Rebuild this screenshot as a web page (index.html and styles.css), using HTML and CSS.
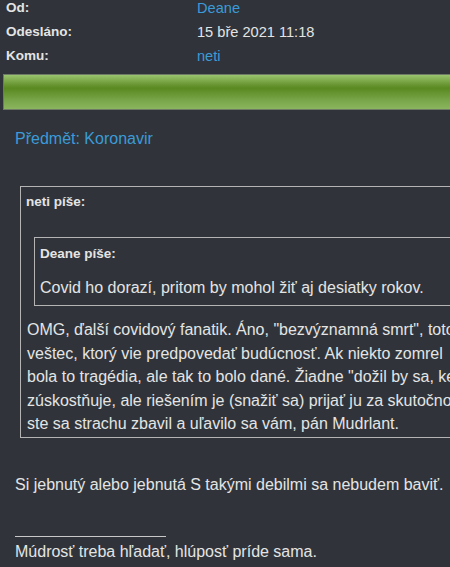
FILE: index.html
```html
<!DOCTYPE html>
<html lang="cs">
<head>
  <meta charset="UTF-8">
  <title>Zpráva</title>
  <link rel="stylesheet" href="styles.css">
</head>
<body>

  <div class="meta">
    <div class="meta-label">Od:</div>
    <div class="meta-value"><a href="#">Deane</a></div>
    <div class="meta-label">Odesláno:</div>
    <div class="meta-value">15 bře 2021 11:18</div>
    <div class="meta-label">Komu:</div>
    <div class="meta-value"><a href="#">neti</a></div>
  </div>

  <div class="bar"></div>

  <div class="subject">Předmět: Koronavir</div>

  <div class="post">
    <div class="quote">
      <div class="quote-head">neti píše:</div>
      <div class="quote inner">
        <div class="quote-head">Deane píše:</div>
        <div class="quote-text">Covid ho dorazí, pritom by mohol žiť aj desiatky rokov.</div>
      </div>
      <div class="quote-text outer-text">OMG, ďalší covidový fanatik. Áno, "bezvýznamná smrt", toto sa dá povedať iba ak ste<br>
veštec, ktorý vie predpovedať budúcnosť. Ak niekto zomrel<br>
bola to tragédia, ale tak to bolo dané. Žiadne "dožil by sa, keby..." ktoré to<br>
zúskostňuje, ale riešením je (snažiť sa) prijať ju za skutočnosť. Dúfam, že<br>
ste sa strachu zbavil a uľavilo sa vám, pán Mudrlant.</div>
    </div>

    <p class="reply">Si jebnutý alebo jebnutá S takými debilmi sa nebudem baviť.</p>

    <div class="signature">Múdrosť treba hľadať, hlúposť príde sama.</div>
  </div>

</body>
</html>
```

FILE: styles.css
```css
body {
  font-family: 'Liberation Sans', Arial, sans-serif;
  background-color: #30343a;
  color: #e4e4e4;
  margin: 0;
  overflow: hidden;
}
a {
  color: #3b9bd8;
  text-decoration: none;
}
.meta {
  display: grid;
  grid-template-columns: 191px 1fr;
  margin-top: -4px;
  padding-left: 6px;
  line-height: 24px;
}
.meta-label {
  font-weight: bold;
  font-size: 13.5px;
}
.meta-value {
  font-size: 14.6px;
  white-space: nowrap;
}
.bar {
  margin: 6px 0 0 3px;
  height: 34px;
  border: 1px solid #6f7a66;
  border-right: none;
  background: linear-gradient(#9cc46f 0, #8bb65c 3px, #5e8c25 12px, #5b8a22 40%, #79a64a 75%, #8bb55f 100%);
}
.subject {
  color: #3b9bd8;
  font-size: 16px;
  line-height: 20px;
  padding: 19px 0 0 15px;
}
.post {
  padding: 37px 0 0 20px;
  font-size: 16px;
}
.quote {
  border: 1px solid #b4b4b4;
  border-right: none;
  padding: 6px 0 1px 5px;
  white-space: nowrap;
  overflow: hidden;
}
.quote-head {
  font-weight: bold;
  font-size: 13.5px;
  line-height: 18px;
}
.quote.inner {
  margin: 26px 0 0 8px;
  padding: 7px 0 6px 5px;
}
.quote.inner .quote-text {
  padding-top: 14px;
  line-height: 22px;
}
.outer-text {
  line-height: 23.5px;
  padding-top: 12px;
  margin-left: 1px;
}
.reply {
  margin: 37px 0 0 -5px;
  line-height: 20px;
}
.signature {
  margin: 41px 0 0 -5px;
  line-height: 20px;
}
.signature::before {
  content: "";
  display: block;
  width: 151px;
  border-top: 1px solid #c8c8c8;
  margin-bottom: 5px;
}
```
